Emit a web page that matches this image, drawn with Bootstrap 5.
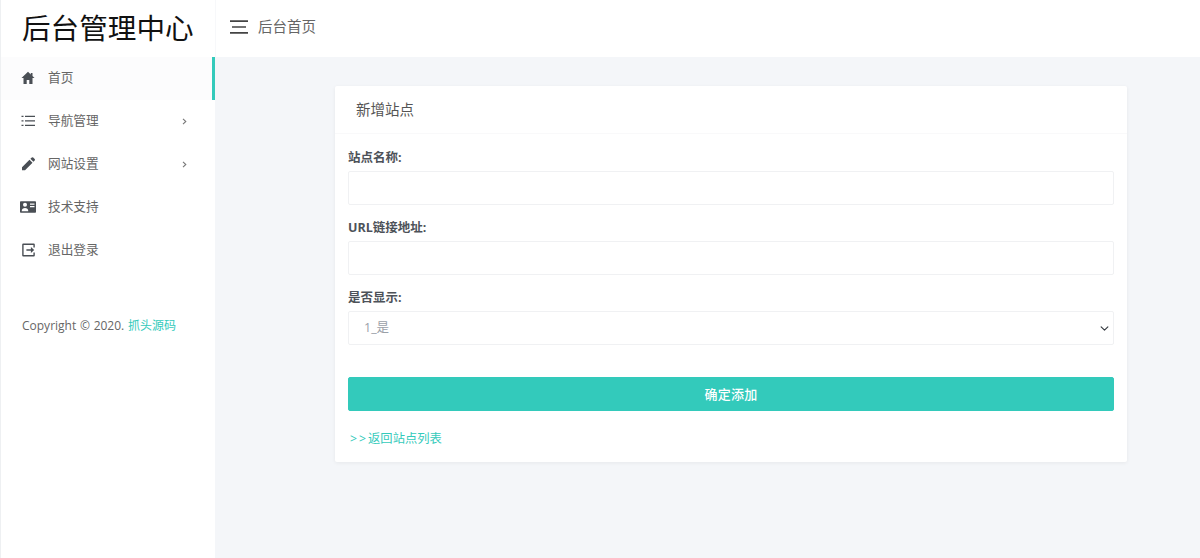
<!DOCTYPE html>
<html lang="zh-CN">
<head>
<meta charset="utf-8">
<title>后台管理中心</title>
<link rel="stylesheet" href="https://cdn.jsdelivr.net/npm/bootstrap@5.3.0/dist/css/bootstrap.min.css">
<style>
html,body{height:100%;overflow:hidden}
body{font-family:"Open Sans","Noto Sans CJK SC",sans-serif;font-size:13px;color:#555;background:#f4f6f9}
.shell{height:558px}
.side{width:215px;flex:none;background:#fff;border-left:1px solid #eef0f2}
.brand{height:57px;font-size:28.6px;line-height:55px;color:#111;padding-left:21px;white-space:nowrap;font-weight:400}
.menu-row{height:43px;padding:0 25px 1px 19px;color:#666;text-decoration:none;font-size:12.7px;border-right:3px solid transparent}
.menu-row:hover{color:#666}
.menu-row.on{background:#fcfcfd;border-right-color:#33cabb}
.ico{width:16px;height:16px;flex:none;margin-right:12px;fill:#4a4f55}
.chev{width:5px;height:7px;flex:none;fill:none;stroke:#777;stroke-width:1.1}
.copy{padding:0 0 0 21px;margin-top:44px;font-size:12px;color:#666;line-height:20px;word-spacing:.6px}
.teal{color:#33cabb;text-decoration:none}
.topbar{height:57px;background:#fff;padding:0 0 3px 14px;font-size:14.5px;color:#666;border-left:1px solid #f7f8fa}
.burger{width:18px;height:14px;margin-right:10px;stroke:#444;stroke-width:1.7;fill:none}
.panel{width:792px;margin:29px 0 0 120px;height:376px;background:#fff;border:0;border-radius:2px;box-shadow:0 1px 4px rgba(0,0,0,.06)}
.panel-head{height:48px;padding-left:21px;font-size:14.5px;color:#555;border-bottom:1px solid #f9f9fa;line-height:48px}
.panel-body{padding:15px 13px 0}
.lab{display:block;font-size:12.5px;font-weight:700;color:#4d5259;line-height:18px;margin:0 0 4px}
.lab-gap{margin-top:14px}
.fld.form-control,.fld.form-select{height:34px;border:1px solid #f0f1f3;border-radius:2px;font-size:12.5px;color:#9aa0a8;padding:4px 15px;box-shadow:none;font-family:inherit;background-color:#fff}
.fld.form-select{background-position:right 3px center;background-size:11px 9px}
.go.btn{display:block;width:100%;height:34px;margin-top:32px;padding:0;background:#33cabb;border:1px solid #33cabb;color:#fff;font-size:13px;font-weight:500;border-radius:2px;line-height:32px;letter-spacing:.2px}
.back{display:block;margin-top:18px;font-size:12.3px;line-height:20px;padding-left:2px}
.arrows{letter-spacing:2px}
</style>
</head>
<body>
<div class="d-flex shell">
  <aside class="side d-flex flex-column">
    <div class="brand">后台管理中心</div>
    <a href="#" class="menu-row on d-flex align-items-center">
      <svg class="ico" viewBox="0 0 16 16"><path d="M8 1.800 1.500 8h2v6h3.200v-4h2.600v4h3.200V8h2l-2-1.900V3h-1.700v1.500z"/></svg><span>首页</span>
    </a>
    <a href="#" class="menu-row d-flex align-items-center">
      <svg class="ico" viewBox="0 0 16 16"><path d="M1.500 2.800h2v1.300h-2zM5 2.800h10v1.300H5zM1.500 7.300h2v1.300h-2zM5 7.300h10v1.300H5zM1.500 11.800h2v1.300h-2zM5 11.800h10v1.300H5z"/></svg><span class="flex-grow-1">导航管理</span>
      <svg class="chev" viewBox="0 0 5 7"><path d="M1 .8 3.800 3.500 1 6.200"/></svg>
    </a>
    <a href="#" class="menu-row d-flex align-items-center">
      <svg class="ico" viewBox="0 0 16 16"><path d="M2 14.200v-3l7.500-7.500 3 3L5 14.200zM10.400 2.800 11.800 1.500a1 1 0 0 1 1.400 0l1.500 1.500a1 1 0 0 1 0 1.400L13.400 5.800z"/></svg><span class="flex-grow-1">网站设置</span>
      <svg class="chev" viewBox="0 0 5 7"><path d="M1 .8 3.800 3.500 1 6.200"/></svg>
    </a>
    <a href="#" class="menu-row d-flex align-items-center">
      <svg class="ico" viewBox="0 0 16 16"><path fill-rule="evenodd" d="M.8 2.200h14.400a.8.800 0 0 1 .8.800v10a.8.800 0 0 1-.8.800H.8A.8.800 0 0 1 0 13V3a.8.800 0 0 1 .8-.8zM5 3.800a2 2 0 1 0 0 4 2 2 0 0 0 0-4zM1.700 12.200h6.600c0-2.100-1.500-3.200-3.300-3.200s-3.300 1.100-3.300 3.200zM10 4.500v1.200h4.500V4.500zM10 7v1.200h4.500V7z"/></svg><span>技术支持</span>
    </a>
    <a href="#" class="menu-row d-flex align-items-center">
      <svg class="ico" viewBox="0 0 16 16"><path d="M3.200 1.600h10.600a1 1 0 0 1 1 1v3h-1.400V3H3.600v10h9.800v-2.600h1.400v3a1 1 0 0 1-1 1H3.200a1 1 0 0 1-1-1V2.600a1 1 0 0 1 1-1zM10.900 5l3.300 3-3.300 3V8.800H6.400V7.300h4.500z"/></svg><span>退出登录</span>
    </a>
    <div class="copy">Copyright © 2020. <a href="#" class="teal">抓头源码</a></div>
  </aside>
  <div class="flex-grow-1 d-flex flex-column">
    <header class="topbar d-flex align-items-center">
      <svg class="burger" viewBox="0 0 18 14"><path d="M0 1.200h18M2 7h14M0 12.800h18"/></svg><span>后台首页</span>
    </header>
    <main>
      <section class="panel">
        <div class="panel-head">新增站点</div>
        <form class="panel-body">
          <label class="lab">站点名称:</label>
          <input class="form-control fld" type="text">
          <label class="lab lab-gap">URL链接地址:</label>
          <input class="form-control fld" type="text">
          <label class="lab lab-gap">是否显示:</label>
          <select class="form-select fld"><option>1_是</option><option>0_否</option></select>
          <button type="button" class="btn go">确定添加</button>
          <a href="#" class="teal back"><span class="arrows">&gt;&gt;</span>返回站点列表</a>
        </form>
      </section>
    </main>
  </div>
</div>
<script src="https://cdn.jsdelivr.net/npm/bootstrap@5.3.0/dist/js/bootstrap.bundle.min.js"></script>
</body>
</html>
